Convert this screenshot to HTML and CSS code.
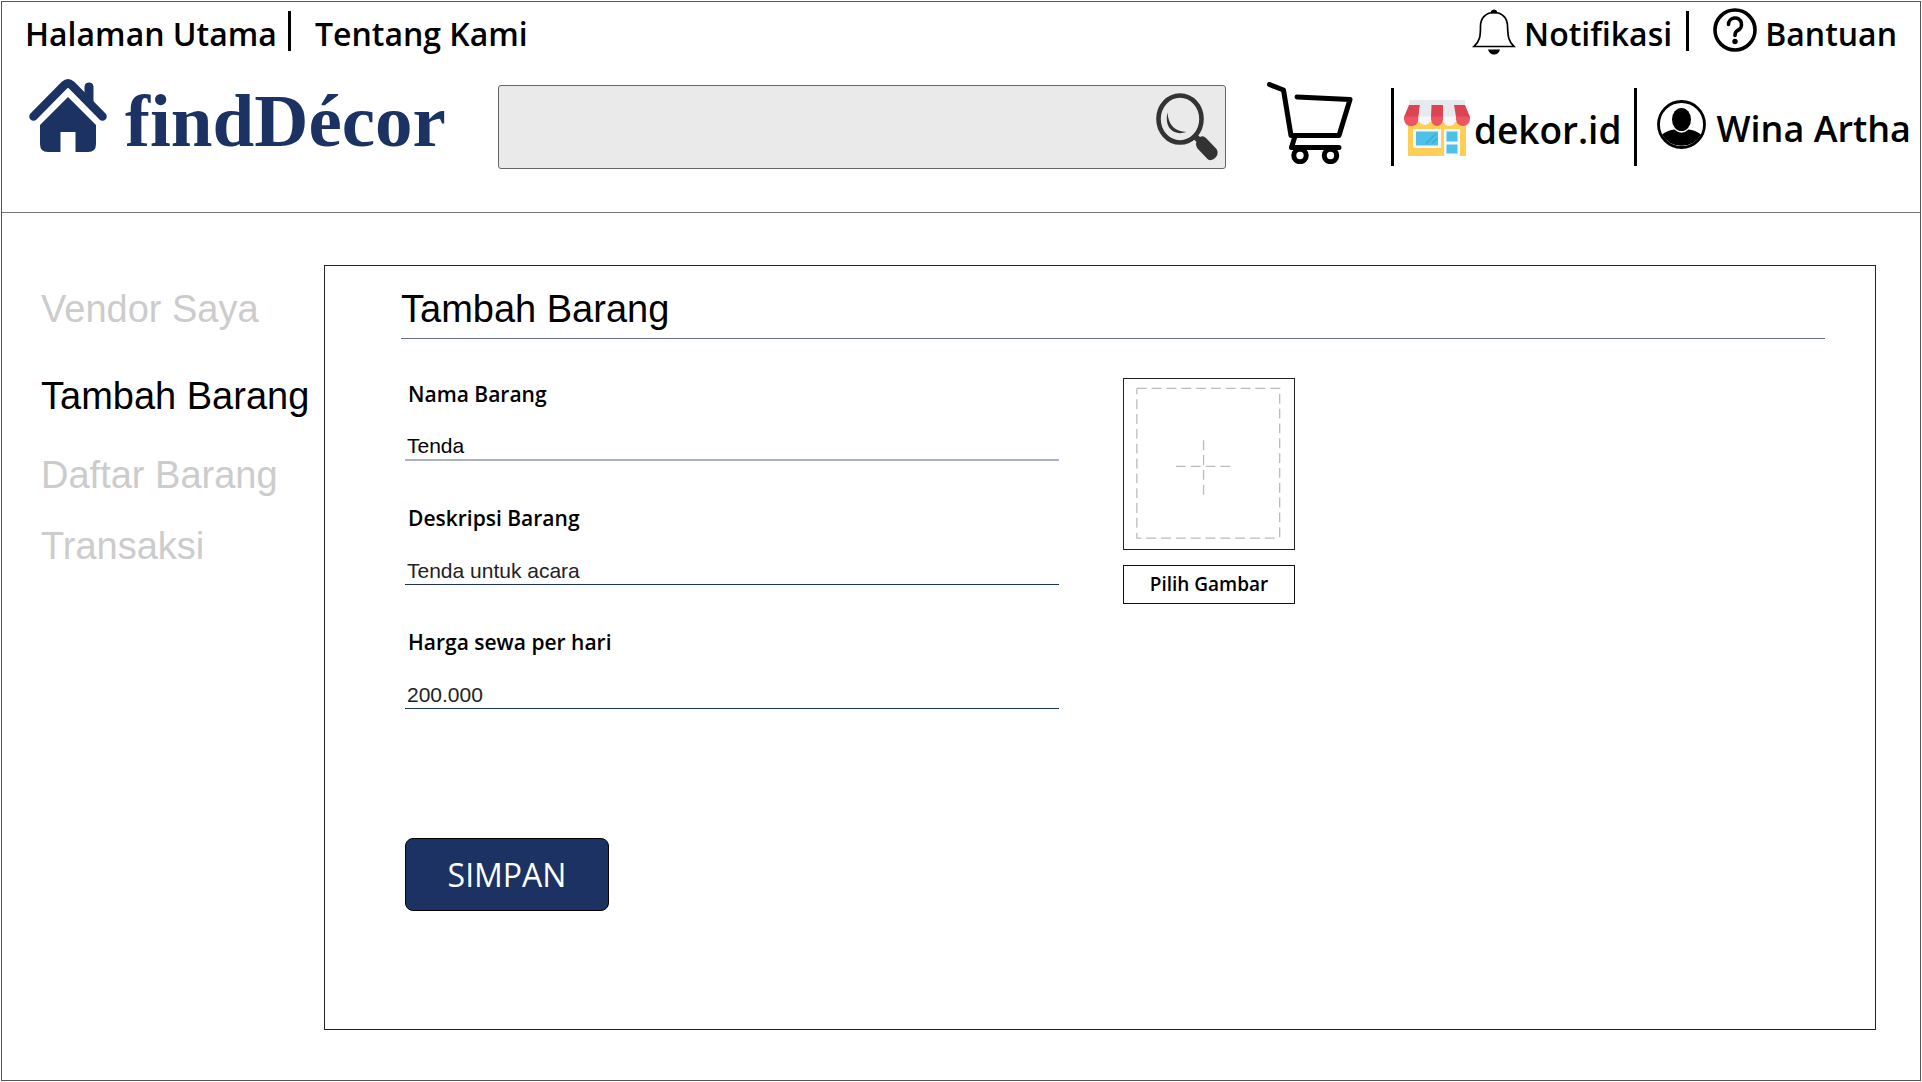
FILE: index.html
```html
<!DOCTYPE html>
<html lang="id">
<head>
<meta charset="utf-8">
<meta name="viewport" content="width=device-width, initial-scale=1">
<title>findDécor – Tambah Barang</title>
<link rel="stylesheet" href="styles.css">
</head>
<body>
<div class="page">
  <header class="header">
    <nav class="topbar" aria-label="Navigasi atas">
      <div class="topbar-group">
        <a class="top-link" href="#">Halaman Utama</a>
        <span class="divider divider-left"></span>
        <a class="top-link" href="#">Tentang Kami</a>
      </div>
      <div class="topbar-group">
        <a class="top-link" href="#">
          <svg class="icon-bell" viewBox="0 0 44 46" aria-hidden="true">
            <path d="M19 4a3 3 0 0 1 6 0z" stroke="#000" stroke-width="1"/>
            <path d="M22 3.500C13 3.500 8.500 10 8.500 17C8.500 27 8 32 2 37.500H42C36 32 36 27 35.500 17C35.500 10 31 3.500 22 3.500Z" fill="none" stroke="#000" stroke-width="1.700"/>
            <path d="M16 40.500H28C27 44 25 45.500 22 45.500S17 44 16 40.500Z"/>
          </svg>
          Notifikasi
        </a>
        <span class="divider divider-right"></span>
        <a class="top-link" href="#">
          <svg class="icon-help" viewBox="0 0 44 44" aria-hidden="true">
            <circle cx="22" cy="22" r="20" fill="none" stroke="#000" stroke-width="3.600"/>
            <path d="M15.500 16.500A6.500 6.500 0 1 1 24.500 22.500Q22 23.700 22 27.500" fill="none" stroke="#000" stroke-width="3.600" stroke-linecap="round"/>
            <circle cx="22" cy="33.500" r="2.700"/>
          </svg>
          Bantuan
        </a>
      </div>
    </nav>
    <div class="mainbar">
      <a class="brand" href="#">
        <svg class="icon-home" viewBox="0 0 78 73" aria-hidden="true">
          <path fill="none" stroke="#1b3263" stroke-width="8.500" stroke-linecap="round" stroke-linejoin="round" d="M4.500 37.500L35.500 6Q39 3 42.500 6L73.500 37.500"/>
          <path fill="#1b3263" d="M55.500 19V7.500Q56 3.500 60 3.500T64.500 7.500V28ZM39 18L67 46V65Q67 73 59 73H46.500V53H31.500V73H19Q11 73 11 65V46Z"/>
        </svg>
        <span class="brand-name">findDécor</span>
      </a>
      <form class="search" role="search">
        <input class="search-input" type="search" aria-label="Cari barang">
        <button class="search-button" type="button" aria-label="Cari">
          <svg class="icon-search" viewBox="0 0 62 68" aria-hidden="true">
            <ellipse cx="24" cy="26" rx="21.500" ry="23.500" fill="none" stroke="#333" stroke-width="4.600"/>
            <path fill="#333" d="M11.500 19.500C12.500 33 19 38 30.500 39C17 43.500 8 34 11.500 19.500ZM37 45.500L41.500 41.500L44 44Q47 42 50 45L60.500 56Q63 60 60 64Q56 69 52 66.500L41.500 55.500Q39 51.500 40.500 49Z"/>
          </svg>
        </button>
      </form>
      <a class="cart" href="#" aria-label="Keranjang">
        <svg class="icon-cart" viewBox="0 0 86 82" aria-hidden="true">
          <g fill="none" stroke="#000" stroke-width="5" stroke-linecap="round" stroke-linejoin="round">
            <path d="M2.500 2.500L16.500 8L24 53.500H72L83 17.500L30 15"/>
            <path d="M28 54L24.500 65.500H72"/>
            <circle cx="33" cy="73.500" r="6.200"/>
            <circle cx="63.500" cy="73.500" r="6.200"/>
          </g>
        </svg>
      </a>
      <span class="divider divider-tall"></span>
      <a class="account" href="#">
        <svg class="icon-store" viewBox="0 0 66 56" aria-hidden="true">
          <path fill="#ffce54" d="M4 22H62V56H4Z"/>
          <path fill="#e6e9ed" d="M5 0H61V6H5Z"/>
          <path fill="#da4453" d="M5 5H16L14.500 17H0Z"/>
          <path fill="#e6e9ed" d="M16 5H27.500V17H14.500Z"/>
          <path fill="#da4453" d="M27.500 5H39V17H27Z"/>
          <path fill="#e6e9ed" d="M39 5H50L52 17H39Z"/>
          <path fill="#da4453" d="M50 5H61L66 17H52Z"/>
          <path fill="#ed5565" d="M0 16.500H14.500V19A7 7 0 0 1 0 19Z"/>
          <path fill="#f5f7fa" d="M14.500 16.500H27V19A6.300 7 0 0 1 14.500 19Z"/>
          <path fill="#ed5565" d="M27 16.500H39V19A6 7 0 0 1 27 19Z"/>
          <path fill="#f5f7fa" d="M39 16.500H52V19A6.500 7 0 0 1 39 19Z"/>
          <path fill="#ed5565" d="M52 16.500H66V19A7 7 0 0 1 52 19Z"/>
          <path fill="#f5f7fa" d="M9 29H37V48H9ZM40 29H56V56H40Z"/>
          <path fill="#4fc1e9" d="M12 31.500H34V45.500H12ZM42.500 31.500H53.500V41.500H42.500ZM42.500 44.500H53.500V53.500H42.500Z"/>
          <path fill="none" stroke="#3bafda" stroke-width="1.800" d="M22 43.500L32 33.500M28 43.500L33 38.500"/>
        </svg>
        dekor.id
      </a>
      <span class="divider divider-tall"></span>
      <a class="account account-user" href="#">
        <svg class="icon-user" viewBox="0 0 49 49" aria-hidden="true">
          <circle cx="24.500" cy="24.500" r="23" fill="none" stroke="#000" stroke-width="2.800"/>
          <ellipse cx="24.500" cy="19.500" rx="9.500" ry="11.500"/>
          <path d="M5 34.500Q11 30 17.500 29.500Q24.500 36 31.500 29.500Q38 30 44 34.500A22.500 22.500 0 0 1 5 34.500Z"/>
        </svg>
        Wina Artha
      </a>
    </div>
  </header>

  <div class="content">
    <nav class="sidebar" aria-label="Menu vendor">
      <a class="side-link" href="#">Vendor Saya</a>
      <a class="side-link side-link-active" href="#" aria-current="page">Tambah Barang</a>
      <a class="side-link" href="#">Daftar Barang</a>
      <a class="side-link" href="#">Transaksi</a>
    </nav>
    <main class="panel">
      <h1 class="panel-title">Tambah Barang</h1>
      <form class="item-form">
        <div class="fields">
          <div class="field">
            <label class="label" for="nama">Nama Barang</label>
            <input class="input input-soft" id="nama" type="text" value="Tenda">
          </div>
          <div class="field">
            <label class="label" for="deskripsi">Deskripsi Barang</label>
            <input class="input" id="deskripsi" type="text" value="Tenda untuk acara">
          </div>
          <div class="field">
            <label class="label" for="harga">Harga sewa per hari</label>
            <input class="input" id="harga" type="text" value="200.000">
          </div>
          <button class="save" type="button">SIMPAN</button>
        </div>
        <div class="upload">
          <svg class="preview" viewBox="0 0 172 172" aria-hidden="true">
            <g fill="none" stroke="#bbb" stroke-width="1.300" stroke-dasharray="10 5">
              <path d="M13 9.500H157.500V161"/>
              <path d="M13 9.500V161H157.500" stroke-dashoffset="4"/>
              <path d="M52.500 88.500H108.500M80.500 62V118"/>
            </g>
          </svg>
          <button class="pick" type="button">Pilih Gambar</button>
        </div>
      </form>
    </main>
  </div>
</div>
</body>
</html>
```
FILE: styles.css
```css
* {
  box-sizing: border-box;
}

body {
  margin: 0;
  padding: 1px;
  background: #fff;
  color: #000;
  font-family: "Open Sans", "Noto Sans", sans-serif;
}

a {
  color: inherit;
  text-decoration: none;
}

svg {
  display: block;
  flex: none;
}

button,
input {
  margin: 0;
  font: inherit;
  color: inherit;
}

.page {
  display: flex;
  flex-direction: column;
  min-height: calc(100vh - 2px);
  border: 1px solid #555;
}

/* Header */

.header {
  padding: 5px 9px 41px 23px;
  border-bottom: 1px solid #777;
}

.topbar {
  display: flex;
  justify-content: space-between;
  height: 48px;
  padding-right: 14px;
}

.topbar-group,
.top-link,
.mainbar,
.brand,
.account {
  display: flex;
  align-items: center;
}

.top-link {
  gap: 8px;
  padding-top: 6px;
  font-size: 32px;
  font-weight: 600;
  line-height: 44px;
  white-space: nowrap;
}

.divider {
  flex: none;
  width: 3px;
  height: 40px;
  background: #000;
}

.divider-left {
  margin: 0 24px 0 11px;
}

.divider-right {
  margin: 0 24px 0 14px;
}

.divider-tall {
  height: 78px;
}

.icon-bell {
  width: 44px;
  height: 46px;
  margin-bottom: 4px;
}

.icon-help {
  width: 44px;
  height: 44px;
  margin-bottom: 8px;
}

.mainbar {
  margin-top: 27px;
}

.brand {
  gap: 18px;
  height: 83px;
  padding: 0 52px 23px 4px;
}

.brand-name {
  padding-top: 12px;
  color: #1b3263;
  font-family: "Liberation Serif", serif;
  font-size: 75px;
  font-weight: 700;
  line-height: 72px;
}

.icon-home {
  width: 78px;
  height: 73px;
}

.search {
  display: flex;
  flex: 1;
  min-width: 0;
  height: 84px;
  border: 1px solid #666;
  border-radius: 3px;
  background: #eaeaea;
}

.search-input {
  flex: 1;
  min-width: 0;
  padding: 0 16px;
  border: 0;
  background: transparent;
  font-size: 32px;
}

.search-button {
  padding: 0 7px;
  border: 0;
  background: transparent;
}

.icon-search {
  width: 62px;
  height: 68px;
}

.cart {
  padding: 0 38px 7px 41px;
}

.icon-cart {
  width: 86px;
  height: 82px;
}

.account {
  gap: 4px;
  padding: 6px 13px 0 10px;
  font-size: 37px;
  font-weight: 600;
  line-height: 48px;
  white-space: nowrap;
}

.account-user {
  gap: 10px;
  padding: 4px 0 0 20px;
  font-size: 36px;
}

.icon-store {
  width: 66px;
  height: 56px;
  margin-bottom: 4px;
}

.icon-user {
  width: 49px;
  height: 49px;
  margin-bottom: 9px;
}

/* Content */

.content {
  display: flex;
  flex: 1;
  padding: 52px 44px 50px 39px;
}

.sidebar {
  display: flex;
  flex: none;
  flex-direction: column;
  gap: 27px;
  width: 283px;
  padding-top: 22px;
}

.side-link,
.panel-title {
  font-family: "Liberation Sans", Arial, sans-serif;
  font-size: 38px;
  font-weight: 400;
  line-height: 44px;
  white-space: nowrap;
}

.side-link {
  color: #ccc;
}

.side-link-active {
  margin: 16px 0 8px;
  color: #000;
}

.panel {
  flex: 1;
  min-width: 0;
  padding: 21px 50px 48px 76px;
  border: 1px solid #222;
}

.panel-title {
  margin: 0;
  padding-bottom: 7px;
  border-bottom: 1px solid #666f85;
}

.item-form {
  display: flex;
  gap: 64px;
  padding: 39px 0 0 4px;
}

.fields {
  display: flex;
  flex: 0 1 654px;
  flex-direction: column;
  align-items: flex-start;
  gap: 41px;
}

.field {
  display: flex;
  flex-direction: column;
  gap: 20px;
  width: 100%;
}

.label {
  padding: 1px 0 0 3px;
  font-size: 21px;
  font-weight: 600;
  line-height: 30px;
}

.input {
  width: 100%;
  height: 32px;
  padding: 4px 2px 0;
  border: 0;
  border-bottom: 1px solid #1b3263;
  border-radius: 0;
  background: transparent;
  color: #222;
  font-family: "Liberation Sans", Arial, sans-serif;
  font-size: 21px;
}

.input-soft {
  border-bottom: 2px solid #a9b2c8;
  color: #000;
}

.save {
  width: 204px;
  height: 73px;
  margin-top: 88px;
  padding: 0;
  border: 1px solid #000;
  border-radius: 8px;
  background: #1b3263;
  color: #fff;
  font-size: 32px;
}

.upload {
  display: flex;
  flex: none;
  flex-direction: column;
  gap: 15px;
  width: 172px;
}

.preview {
  width: 100%;
  height: auto;
  border: 1px solid #222;
}

.pick {
  height: 39px;
  padding: 0 0 2px;
  border: 1px solid #111;
  background: #fff;
  font-size: 19px;
  font-weight: 600;
}
```
